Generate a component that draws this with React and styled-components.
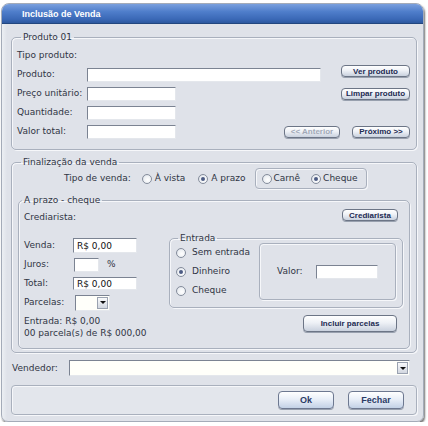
import React from 'react';
import styled, { createGlobalStyle } from 'styled-components';

const ui = `"DejaVu Sans", Verdana, sans-serif`;
const btnFont = `"Liberation Sans", Arial, sans-serif`;

const Global = createGlobalStyle`
  body { margin: 0; background: #ffffff; }
  * { box-sizing: border-box; }
`;

const Window = styled.div`
  width: 423px;
  height: 419px;
  margin: 3px 0 0 1px;
  display: flex;
  flex-direction: column;
  background: linear-gradient(90deg, #eceff3, #dfe2e9 5px);
  border: 1px solid #a4abb8;
  border-radius: 8px 8px 7px 7px;
  box-shadow: 1px 2px 2px rgba(0, 0, 0, 0.55);
  overflow: hidden;
  font: 9px/11px ${ui};
  color: #2f3544;
`;

const TitleBar = styled.div`
  height: 20px;
  flex: none;
  display: flex;
  align-items: center;
  padding-left: 20px;
  background: linear-gradient(#7aa0de, #4f7ecb 40%, #3a68b6 80%, #2d589f);
  border-bottom: 1px solid #22467f;
  color: #ffffff;
  font: bold 9px ${btnFont};
`;

const Body = styled.div`
  flex: 1;
  display: flex;
  flex-direction: column;
  padding: 8px 6px 8px 9px;
`;

const Group = styled.fieldset`
  margin: ${p => p.$mt || 0}px 0 0;
  padding: ${p => p.$pad};
  border: 1px solid #a9b0bd;
  border-radius: 5px;
  box-shadow: inset 1px 1px 0 #f6f7fa, 1px 1px 0 #f6f7fa;
  min-width: 0;
`;

const Legend = styled.legend`
  margin-left: ${p => p.$ml}px;
  padding: 0 2px;
  font: 9px/${p => p.$lh || 11}px ${ui};
  color: #2f3544;
`;

const Row = styled.div`
  display: flex;
  align-items: center;
  height: ${p => p.$h || 19}px;
  margin-left: ${p => p.$ml || 0}px;
`;

const Label = styled.span`
  width: ${p => p.$w}px;
  flex: none;
  white-space: nowrap;
`;

const Text = styled.span`
  white-space: nowrap;
  margin-left: ${p => p.$ml || 0}px;
`;

const Input = styled.div`
  width: ${p => p.$w}px;
  height: ${p => p.$h || 14}px;
  flex: none;
  margin-left: ${p => p.$ml || 0}px;
  display: flex;
  align-items: center;
  padding-left: 3px;
  background: #ffffff;
  border: 1px solid;
  border-color: #7b8392 #e4e7ec #e4e7ec #7b8392;
  color: #111111;
  font: 9px ${ui};
`;

const Spacer = styled.div`
  flex: 1;
`;

const Button = styled.button`
  width: ${p => p.$w}px;
  height: ${p => p.$h || 12}px;
  flex: none;
  margin: ${p => p.$mt || 0}px ${p => p.$mr || 0}px 0 ${p => p.$ml || 0}px;
  align-self: ${p => (p.$top ? 'flex-start' : 'auto')};
  padding: 0;
  border: 1px solid #6c7586;
  border-radius: 4px;
  background: linear-gradient(#ffffff, #eef1f6 45%, #c9d1de);
  box-shadow: 0 1px 0 #98a0ae;
  color: ${p => (p.disabled ? '#a1a9b7' : '#1c2a52')};
  font: bold ${p => p.$fs || 8}px ${btnFont};
  white-space: nowrap;
`;

const BigButton = styled(Button)`
  background: linear-gradient(#ffffff, #e9eff8 45%, #c3d1e6);
  border-color: #6d7890;
  color: #2b3b66;
`;

const Radio = styled.span`
  width: 10px;
  height: 10px;
  flex: none;
  border-radius: 50%;
  border: 1px solid #858d9c;
  background: radial-gradient(circle at 60% 60%, #ffffff, #eceff3 60%, #b9bfca);
  display: inline-flex;
  align-items: center;
  justify-content: center;
  &::after {
    content: '';
    width: 4px;
    height: 4px;
    border-radius: 50%;
    background: ${p => (p.$on ? '#4c5b84' : 'transparent')};
  }
`;

const Option = styled.label`
  display: flex;
  align-items: center;
  gap: ${p => p.$gap || 3}px;
  margin-left: ${p => p.$ml || 0}px;
  height: ${p => p.$h || 'auto'};
  white-space: nowrap;
`;

const OptionBox = styled.div`
  height: 21px;
  margin-left: ${p => p.$ml}px;
  display: flex;
  align-items: center;
  padding: 0 8px 0 6px;
  border: 1px solid #a9b0bd;
  border-radius: 4px;
  box-shadow: inset 1px 1px 0 #f6f7fa, 1px 1px 0 #f6f7fa;
`;

const Select = styled.div`
  width: ${p => p.$w}px;
  height: ${p => p.$h}px;
  flex: none;
  margin-left: ${p => p.$ml || 0}px;
  display: flex;
  justify-content: flex-end;
  align-items: center;
  padding: 1px;
  background: #fffffa;
  border: 1px solid;
  border-color: #7b8392 #e4e7ec #e4e7ec #7b8392;
`;

const DropButton = styled.span`
  width: 11px;
  height: 100%;
  display: flex;
  align-items: center;
  justify-content: center;
  background: linear-gradient(#f9fafb, #d2d7e0);
  border: 1px solid #9aa2b0;
  &::after {
    content: '';
    border-left: 3px solid transparent;
    border-right: 3px solid transparent;
    border-top: 3px solid #111111;
  }
`;

const Columns = styled.div`
  display: flex;
  margin-top: 9px;
`;

const LeftCol = styled.div`
  width: 145px;
  flex: none;
  padding-top: 2px;
  display: flex;
  flex-direction: column;
`;

const RightCol = styled.div`
  flex: 1;
  display: flex;
  flex-direction: column;
  align-items: flex-end;
`;

const EntradaInner = styled.div`
  display: flex;
  width: 100%;
`;

const RadioCol = styled.div`
  width: 83px;
  display: flex;
  flex-direction: column;
`;

const ValorBox = styled.div`
  flex: 1;
  height: 57px;
  display: flex;
  align-items: center;
  padding-left: 17px;
  border: 1px solid #a9b0bd;
  border-radius: 4px;
  box-shadow: inset 1px 1px 0 #f6f7fa, 1px 1px 0 #f6f7fa;
`;

const ActionPanel = styled.div`
  height: 30px;
  margin-top: 7px;
  display: flex;
  align-items: center;
  justify-content: flex-end;
  gap: 14px;
  padding-right: 12px;
  border: 1px solid #a9b0bd;
  border-radius: 4px;
  background: #e3e6ec;
  box-shadow: inset 1px 1px 0 #f6f7fa, 1px 1px 0 #f6f7fa;
`;

export default function App() {
  return (
    <>
      <Global />
      <Window>
        <TitleBar>Inclusão de Venda</TitleBar>
        <Body>
          <Group $pad="3px 6px 8px 5px">
            <Legend $ml={4}>Produto 01</Legend>
            <Row><Label $w={70}>Tipo produto:</Label></Row>
            <Row>
              <Label $w={70}>Produto:</Label>
              <Input $w={234} />
              <Spacer />
              <Button $w={69} $top>Ver produto</Button>
            </Row>
            <Row>
              <Label $w={70}>Preço unitário:</Label>
              <Input $w={89} />
              <Spacer />
              <Button $w={69}>Limpar produto</Button>
            </Row>
            <Row>
              <Label $w={70}>Quantidade:</Label>
              <Input $w={89} />
            </Row>
            <Row>
              <Label $w={70}>Valor total:</Label>
              <Input $w={89} />
              <Spacer />
              <Button $w={56} disabled>&lt;&lt; Anterior</Button>
              <Button $w={58} $ml={12}>Próximo &gt;&gt;</Button>
            </Row>
          </Group>

          <Group $mt={7} $pad="0 6px 3px 6px">
            <Legend $ml={3}>Finalização da venda</Legend>
            <Row $h={21} $ml={46}>
              <Text>Tipo de venda:</Text>
              <Option $ml={11}><Radio />À vista</Option>
              <Option $ml={13}><Radio $on />A prazo</Option>
              <OptionBox $ml={9}>
                <Option $gap={2}><Radio />Carnê</Option>
                <Option $gap={2} $ml={11}><Radio $on />Cheque</Option>
              </OptionBox>
            </Row>

            <Group $mt={6} $pad="3px 6px 9px 5px">
              <Legend $ml={-2}>A prazo - cheque</Legend>
              <Row $h={16}>
                <Label $w={70}>Crediarista:</Label>
                <Spacer />
                <Button $w={56} $mr={5} $top>Crediarista</Button>
              </Row>
              <Columns>
                <LeftCol>
                  <Row>
                    <Label $w={49}>Venda:</Label>
                    <Input $w={64} $h={15}>R$ 0,00</Input>
                  </Row>
                  <Row>
                    <Label $w={49}>Juros:</Label>
                    <Input $w={25} $ml={1} />
                    <Text $ml={8}>%</Text>
                  </Row>
                  <Row>
                    <Label $w={49}>Total:</Label>
                    <Input $w={64} $h={13}>R$ 0,00</Input>
                  </Row>
                  <Row>
                    <Label $w={49}>Parcelas:</Label>
                    <Select $w={35} $h={16} $ml={2}><DropButton /></Select>
                  </Row>
                  <Row $h={12} style={{ marginTop: 3 }}><Text>Entrada: R$ 0,00</Text></Row>
                  <Row $h={12}><Text>00 parcela(s) de R$ 000,00</Text></Row>
                </LeftCol>
                <RightCol>
                  <Group $pad="0 6px 7px 6px" style={{ width: '100%' }}>
                    <Legend $ml={2} $lh={9}>Entrada</Legend>
                    <EntradaInner>
                      <RadioCol>
                        <Option $gap={6} $h="19px"><Radio />Sem entrada</Option>
                        <Option $gap={6} $h="19px"><Radio $on />Dinheiro</Option>
                        <Option $gap={6} $h="19px"><Radio />Cheque</Option>
                      </RadioCol>
                      <ValorBox>
                        <Text>Valor:</Text>
                        <Input $w={62} $ml={13} />
                      </ValorBox>
                    </EntradaInner>
                  </Group>
                  <Button $w={94} $h={17} $mr={6} $mt={7}>Incluir parcelas</Button>
                </RightCol>
              </Columns>
            </Group>
          </Group>

          <Row $h={20} style={{ marginTop: 5 }}>
            <Label $w={57} style={{ marginLeft: 1 }}>Vendedor:</Label>
            <Select $w={341} $h={16}><DropButton /></Select>
          </Row>

          <ActionPanel>
            <BigButton $w={56} $h={18} $fs={9}>Ok</BigButton>
            <BigButton $w={56} $h={18} $fs={9}>Fechar</BigButton>
          </ActionPanel>
        </Body>
      </Window>
    </>
  );
}
